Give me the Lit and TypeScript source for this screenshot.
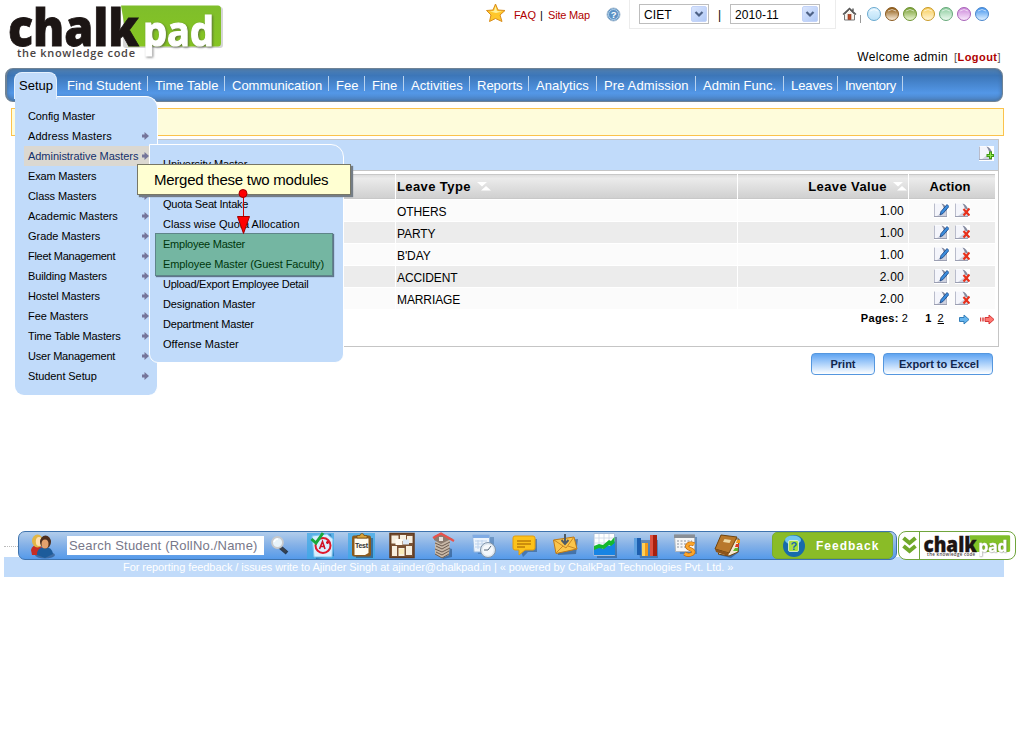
import { LitElement, html, svg, css } from "lit";
import { customElement, property } from "lit/decorators.js";
import { styleMap } from "lit/directives/style-map.js";

type Entry = [label: string, tracking: number];

const NAV: Entry[] = [["Find Student", .04], ["Time Table", .06], ["Communication", 0], ["Fee", .06], ["Fine", -.05], ["Activities", .06], ["Reports", 0], ["Analytics", .1], ["Pre Admission", .12], ["Admin Func.", .02], ["Leaves", -.1], ["Inventory", -.28]];
const SETUP: Entry[] = [["Config Master", -.1], ["Address Masters", .08], ["Administrative Masters", -.04], ["Exam Masters", -.17], ["Class Masters", -.1], ["Academic Masters", -.04], ["Grade Masters", -.04], ["Fleet Management", -.28], ["Building Masters", -.15], ["Hostel Masters", -.1], ["Fee Masters", -.08], ["Time Table Masters", -.15], ["User Management", -.22], ["Student Setup", -.08]];
const SUBMENU: Entry[] = [["University Master", -.04], ["Institute Master", -.04], ["Quota Seat Intake", -.2], ["Class wise Quota Allocation", .03], ["Employee Master", -.24], ["Employee Master (Guest Faculty)", -.09], ["Upload/Export Employee Detail", -.26], ["Designation Master", -.14], ["Department Master", -.2], ["Offense Master", .06]];
const ROWS = [["OTHERS", "1.00"], ["PARTY", "1.00"], ["B'DAY", "1.00"], ["ACCIDENT", "2.00"], ["MARRIAGE", "2.00"]];
const THEMES = [["#dff3ff", "#bfe3f8", "#6aa9cf"], ["#93601c", "#f3e4cf", "#8a5a20"], ["#7da23a", "#e3f0c8", "#6f9434"], ["#f8cf62", "#fff3cf", "#c99a28"], ["#93cfa4", "#e6f7ea", "#67a97a"], ["#cf8fdc", "#f6e2fa", "#a864b8"], ["#4a98ee", "#d6ebff", "#4a86cc"]];

const page = svg`<path d="M0 0H15V15H0Z" fill="#fff"/><path d="M1 .5H8.500L12.500 4.500V13H1Z" fill="#f4f5fb"/><path d="M3 13L12.500 6V13Z" fill="#cfd2df"/><path d="M.5 .5V13.500" stroke="#b9bccb"/><path d="M0 13.500H13" stroke="#9b9fb2"/><path d="M12.500 5V13" stroke="#b4b7c6"/><path d="M7.500 .5Q12 1.500 13 7L10 5.500 9 3Z" fill="#858a9e"/>`;

const ICONS: Record<string, unknown> = {
  grade: svg`<rect x="0" y="1" width="27" height="26" fill="#3fa9e6" opacity=".75"/><path d="M7 5L24 2 27 24 9 27Z" fill="#1b5e9a" opacity=".6"/><path d="M5 4L20 2 26 7 25 25 7 25Z" fill="#d8efff" stroke="#7cc3ee"/><circle cx="16" cy="13.500" r="7.500" fill="none" stroke="#e0182c" stroke-width="2"/><path d="M12.500 17L15.500 9.500 18 17M13 14.500H18M19 10.500H22M20.500 9V12" fill="none" stroke="#d01226" stroke-width="1.600"/><path d="M4.500 7L9 11 16 1" fill="none" stroke="#18a83c" stroke-width="3"/>`,
  test: svg`<rect x="0" y="1" width="27" height="26" fill="#3fa9e6" opacity=".75"/><path d="M6 6H25V26H8Z" fill="#27415c" opacity=".55"/><rect x="4" y="3.500" width="19" height="21" rx="2" fill="#8b5a1b"/><path d="M6.500 6.500H20.500V21L17 23H6.500Z" fill="#fffdf2"/><path d="M9 6V3.500H12A2 2 0 0 1 16 3.500H19V6Z" fill="#d9a43a" stroke="#73480f" stroke-width=".7"/><text x="7" y="15.500" font-size="7" font-weight="700" font-family="Liberation Sans" textLength="13" fill="#333">Test</text>`,
  board: svg`<rect x="2" y="1.500" width="24" height="24" fill="#7a5234" stroke="#5f3b20" stroke-width="1.500"/><path d="M3.500 3.500H10.500V11.500H3.500ZM12 3H18V9H12ZM19 4H24.500V11H19ZM4 14H9V24H4ZM10.500 16H16.500V24H10.500ZM18 14H24V23H18Z" fill="#f7efdf"/><path d="M7.500 7H14.500V13H7.500Z" fill="#fffaf0"/><path d="M15 7.500H21V12.500H15Z" fill="#dce8f5"/><path d="M11 17H16V22H11Z" fill="#fbedb8"/>`,
  papers: svg`<path d="M9 13L23 17V25L14 27Z" fill="#274b74" opacity=".55"/><path d="M6 10L18 6 21 9 20 23 13 26 6 22Z" fill="#c8b8a7"/><path d="M6 11L13 14 21 10M7 14L13 17 20 13M6 17L13 20 21 16M7 20L13 23 20 19M6 22L13 26 20 22" stroke="#6c5d52" fill="none" stroke-width="1"/><path d="M5 8L5 4 12 1 24 7 20 8 12 12Z" fill="#8c7c70"/><path d="M4 6L12 1.500 25 9" fill="none" stroke="#e8524c" stroke-width="2.200"/><path d="M10 5H14V9H10Z" fill="#e8e2dc"/>`,
  clock: svg`<path d="M7 5H25V22H9Z" fill="#28598f" opacity=".4"/><path d="M3.500 3H20.500V20H5Z" fill="#edf4fc" stroke="#93b6df"/><path d="M4 3H20V6H4Z" fill="#7fabe4"/><path d="M6 9H18M6 12H15M6 15H13M9 8V17M13 8V12" stroke="#bdd2ec"/><circle cx="19" cy="18" r="7.500" fill="#dfe7ef" stroke="#8094a9"/><circle cx="19" cy="18" r="5.500" fill="#f5f8fb"/><path d="M19 18L22 14M19 18H15" stroke="#58697a" fill="none"/>`,
  speech: svg`<path d="M6 7H27V20H18L13 25Z" fill="#274b74" opacity=".5"/><path d="M5 4H23Q25 4 25 6V16Q25 18 23 18H15L9 23V18H5Q3 18 3 16V6Q3 4 5 4Z" fill="#fcc21b" stroke="#e49c0b"/><path d="M7 9H21M7 12H21M7 15H15" stroke="#bd7d09" stroke-width="1.500"/>`,
  mail: svg`<path d="M5 9L27 7 25 22 7 23Z" fill="#274b74" opacity=".55"/><path d="M2.500 8L23 5 26 17 5 21.500Z" fill="#fbc54b" stroke="#bf7915"/><path d="M3 8L15 16 23 5M5 21L12 14M26 17L17 14" stroke="#c98724" fill="none"/><path d="M14 2V11M10.500 8L14 12 17.500 8" stroke="#4f5b66" stroke-width="2" fill="none"/>`,
  chart: svg`<path d="M6 5H26V26H6Z" fill="#274b74" opacity=".5"/><path d="M3 1.500H23.500V23.500H3Z" fill="#fff" stroke="#a8bdd8"/><path d="M3 6H23M3 11H23M8 2V20M13 2V20M18 2V20" stroke="#ccd5e5" stroke-width=".8"/><path d="M3 17L8 14 12 17 16 13 19 14 24 9V23H3Z" fill="#1784e4"/><path d="M3 14L8 12 12 13 18 8 20 9 23.500 5V11L20 14 18 13 13 17 8 16 3 18Z" fill="#15b92d"/>`,
  bars: svg`<path d="M5 8H26V26H8Z" fill="#274b74" opacity=".45"/><rect x="2" y="6" width="7" height="17" fill="#1e5fb0"/><rect x="2" y="6" width="3" height="17" fill="#5ea1e2"/><rect x="10" y="11" width="6" height="13" fill="#f09b18"/><rect x="10" y="11" width="3" height="13" fill="#ffd057"/><rect x="18" y="3" width="7" height="21" fill="#a8200f"/><rect x="18" y="3" width="3" height="21" fill="#dd5140"/>`,
  money: svg`<path d="M6 5H25V22H8Z" fill="#28598f" opacity=".45"/><path d="M2.500 3H22.500V19.500H3.500Z" fill="#f6f6f6" stroke="#aeb5bd"/><path d="M2 2.500H23V6H2Z" fill="#888e96"/><path d="M5 9H20M5 12H20M5 15H18" stroke="#aeb4bc" stroke-dasharray="2 1.500" stroke-width="1.500"/><path d="M22 12.500Q19 10.500 16 12.500 13.500 14.500 17 16.500L20 18Q23 20 20 22 16 24 12.500 21.500" fill="none" stroke="#b45f08" stroke-width="4"/><path d="M22 12.500Q19 10.500 16 12.500 13.500 14.500 17 16.500L20 18Q23 20 20 22 16 24 12.500 21.500" fill="none" stroke="#fba52a" stroke-width="2.800"/>`,
  book: svg`<path d="M6 23L25 13 26 20 18 26Z" fill="#274b74" opacity=".6"/><path d="M20 7L26 7 25 20 16 24 5 22Z" fill="#f3ead2" stroke="#6e430f"/><path d="M8 3L24 5 16 21 2 17Z" fill="#b8782c" stroke="#6e430f"/><path d="M2 17L16 21 15 24 3 20Z" fill="#8d541b"/><path d="M11.500 7L18 8 16.500 11 10 10Z" fill="#efd9a4"/><path d="M24 8H27V11H23Z" fill="#f29a1b"/><path d="M23 12H26V15H22Z" fill="#db3a24"/><path d="M22 16H25V19H20Z" fill="#65b62d"/>`,
};
const DOCK = ["grade", "test", "board", "papers", "clock", "speech", "mail", "chart", "bars", "money", "book"];

const logoArt = (small: boolean) => svg`
  <defs>
    <linearGradient id="leaf" x1="0" y1="0" x2="0" y2="1"><stop offset="0" stop-color="#7fbe2b"/><stop offset="1" stop-color="#86c522"/></linearGradient>
  </defs>
  <rect x="123" y="7" width="100" height="41" rx="3" fill="#bbb" opacity="${small ? 0 : .6}"/>
  <path d="M121 5.500H218Q221 5.500 221 9V43Q221 46.500 218 46.500H128Z" fill="url(#leaf)"/>
  <g font-family="Open Sans, Noto Sans, sans-serif">
    <text x="8" y="46" font-size="52" font-weight="800" textLength="131" lengthAdjust="spacingAndGlyphs" fill="#1c1514" stroke="#1c1514" stroke-width=".8">chalk</text>
    <text x="143" y="46" font-size="41" font-weight="700" textLength="71" lengthAdjust="spacingAndGlyphs" fill="#fff" stroke="#fff" stroke-width="1.200" class="pad">pad</text>
    <text x="17" y="57" font-size="11" font-weight="600" textLength="118" fill="#4a4444">the knowledge code</text>
  </g>`;

@customElement("drop-select")
class DropSelect extends LitElement {
  @property() value = "";
  static styles = css`
    :host { display: flex; box-sizing: border-box; height: 20px; border: 1px solid #bdbdbd; background: #fff; align-items: center; justify-content: space-between; padding: 0 1px 0 4px; font: 12px "Liberation Sans", sans-serif; letter-spacing: .1px; }
    svg { display: block; }
    span { padding-top: 1px; }
  `;
  render() {
    return html`<span>${this.value}</span><svg width="16" height="16" viewBox="0 0 16 16"><defs><linearGradient id="b" x1="0" y1="0" x2="1" y2="1"><stop stop-color="#dbe6fd"/><stop offset="1" stop-color="#afc8f6"/></linearGradient></defs><rect x=".5" y=".5" width="15" height="15" rx="1.500" fill="url(#b)" stroke="#c3d3f8"/><path d="M4.500 6L8 9.500 11.500 6" fill="none" stroke="#4d6185" stroke-width="2.200"/></svg>`;
  }
}

@customElement("app-root")
class AppRoot extends LitElement {
  static styles = css`
    :host { display: block; position: relative; width: 1020px; height: 744px; overflow: hidden; background: #fff; color: #000; font: 12px/1 "Liberation Sans", Arial, sans-serif; }
    * { box-sizing: border-box; }
    svg { display: block; flex: none; }
    span { white-space: nowrap; }
    .pad { filter: drop-shadow(1px 1px 1px rgba(60, 60, 60, .6)); }
    .header { height: 68px; display: grid; grid-template-columns: 486px 1fr; }
    .tools { display: grid; grid-template-rows: 29px 1fr; }
    .toolrow { display: flex; align-items: center; height: 29px; }
    .star { margin-top: -3px; }
    .faq { width: 25px; margin-left: 8px; color: #b00000; font-size: 11px; padding-top: 1px; }
    .bar { width: 8px; font-size: 11px; margin-left: 1px; padding-top: 1px; }
    .map { width: 45px; color: #b00000; font-size: 11px; letter-spacing: -.2px; padding-top: 1px; }
    .help { margin-left: 13px; }
    .chooser { margin: -1px 0 0 8px; width: 207px; height: 30px; border: 1px solid #ececec; padding-left: 9px; display: flex; align-items: center; }
    .chooser drop-select { width: 70px; }
    .chooser .year { width: 90px; }
    .chooser span { width: 21px; text-align: center; padding-top: 1px; }
    .home { margin: -1px 0 0 6px; }
    .thin { width: 1px; height: 8px; margin: 8px 5px 0 3px; background: #999; }
    .themes { display: flex; gap: 2px; margin-top: -2px; }
    .welcome { display: flex; justify-content: flex-end; padding: 22px 19px 0 0; gap: 6px; }
    .hello { letter-spacing: .38px; }
    .logout { font-size: 11px; color: #555; letter-spacing: .45px; padding-top: 1px; }
    .logout b { color: #b00000; }
    .nav { margin: 0 17px 0 5px; height: 34px; padding-top: 9px; border: 1px solid #6f8396; border-left: 2px solid #6f8396; border-radius: 8px; box-shadow: inset 0 0 4px #47698f; background: linear-gradient(#5183b6, #3c76b8 20%, #5397e7 75%, #4c84c4); display: grid; grid-template-columns: 88px 77px 104px 36px 39px 66px 59px 68px 99px 88px 54px 65px; padding-left: 53px; }
    .nav span { color: #fff; font-size: 13px; line-height: 19px; padding-left: 7px; }
    .navitem { height: 15px; margin-top: -2px; border-right: 1px solid #b8d2ef; display: flex; }
    .notice { margin: 6px 16px 0 11px; height: 28px; border: 1px solid #fbc24c; background: #fefcdb; }
    .panel { margin: 3px 21px 0 16px; height: 208px; border: 1px solid #c5c5c5; display: flex; flex-direction: column; }
    .title { height: 31px; background: #c1dbfa; border-bottom: 1px solid #c5c5c5; display: flex; justify-content: flex-end; padding: 6px 4px 0 0; }
    .table { margin: 3px 3px 0 4px; display: grid; grid-template-columns: 374px 341px 170px 86px; column-gap: 1px; row-gap: 1px; }
    .head { height: 25px; background: linear-gradient(#dedede, #ebebeb 15%, #d0d0d0); border-top: 1px solid #c8c8c8; border-bottom: 1px solid #c8c8c8; display: flex; align-items: center; font-weight: 700; font-size: 13px; letter-spacing: .4px; padding-left: 1px; gap: 6px; }
    .cell { height: 21px; background: #fbfbfb; padding: 5px 4px 0 1px; font-size: 12px; line-height: 14px; letter-spacing: -.1px; }
    .odd { background: #ececec; }
    .right { justify-content: flex-end; text-align: right; padding-right: 4px; }
    .headright { padding-right: 1px; }
    .value { letter-spacing: .25px; padding-top: 4px; }
    .center { justify-content: center; padding-right: 5px; letter-spacing: .1px; }
    .actions { display: flex; gap: 6px; padding: 3px 0 0 25px; }
    .pages { display: flex; align-items: center; height: 18px; justify-content: flex-end; padding-right: 3px; font-size: 11px; letter-spacing: .3px; }
    .pages b:nth-of-type(2) { margin: 0 6px 0 17px; }
    .next { margin: 2px 0 0 15px; }
    .last { margin: 2px 0 0 10px; }
    .count { margin-left: 3px; }
    .buttons { display: flex; gap: 8px; justify-content: flex-end; padding: 6px 27px 0 0; height: 184px; }
    .button { width: 64px; height: 22px; border: 1px solid #5597df; border-radius: 4px; background: linear-gradient(#5fa4f0, #8fc0f8 30%, #fff); font-size: 11px; font-weight: 700; color: #12274e; text-align: center; line-height: 20px; }
    .wide { width: 110px; padding-left: 2px; }
    .dock { display: flex; height: 29px; }
    .dots { width: 14px; margin-left: 4px; height: 16px; border-bottom: 1px dotted #bbb; }
    .dockbar { position: relative; z-index: 1; width: 879px; display: flex; align-items: center; border: 1px solid #3e73ae; border-radius: 7px; background: linear-gradient(#b2cdeb, #83b0e7 50%, #559aea); }
    .people { margin-left: 9px; }
    .search { margin-left: 11px; width: 197px; height: 19px; background: #fff; color: #777789; font-size: 13px; line-height: 19px; padding-left: 2px; letter-spacing: .2px; }
    .lens { margin-left: 6px; }
    .apps { display: flex; justify-content: space-between; width: 434px; margin-left: 17px; }
    .feedback { margin-left: 31px; width: 121px; height: 27px; border-radius: 5px; background: #8abc27; border: 1px solid #79ad2c; display: flex; align-items: center; padding-left: 8px; gap: 9px; color: #fff; font: 700 12px "Liberation Sans", sans-serif; letter-spacing: 1px; }
    .badge { margin-left: 1px; width: 118px; border: 1px solid #70a53c; border-radius: 8px; background: #fff; display: flex; align-items: center; }
    .arrows { border-right: 1px solid #70a53c; width: 21px; height: 27px; display: flex; align-items: center; justify-content: center; }
    .mini { margin-left: 1px; }
    .footer { margin: -3px 16px 0 4px; height: 20px; background: #c1dbfa; color: #fff; font-size: 11px; line-height: 21px; padding-left: 119px; letter-spacing: -.06px; }
    .tab { position: absolute; left: 14px; top: 72px; width: 43px; height: 27px; background: #c1dbfa; border: 1px solid #e4f0fd; border-bottom: 0; border-radius: 8px 8px 0 0; padding: 6px 0 0 4px; font-size: 13px; z-index: 3; }
    .menu { position: absolute; left: 15px; top: 96px; width: 143px; height: 299px; background: #c1dbfa; border-top: 1px solid #fff; border-right: 1px solid #fff; border-radius: 0 12px 9px 9px; padding: 9px 0 0 9px; z-index: 2; }
    .item { width: 125px; height: 20px; display: flex; align-items: center; justify-content: space-between; padding: 0 0 0 4px; font-size: 11px; }
    .active { background: #dbd8d1; color: #14306c; }
    .sub { position: absolute; left: 149px; top: 144px; width: 195px; height: 219px; background: #c1dbfa; border: 1px solid #fff; border-radius: 0 13px 9px 9px; padding: 9px 0 0 9px; z-index: 4; }
    .sub .item { width: 180px; }
    .mark { position: absolute; left: 155px; top: 233px; width: 178px; height: 43px; background: rgba(0, 128, 30, .4); border: 1px solid rgba(80, 100, 120, .6); box-shadow: 1px 1px 1px #60758c; z-index: 5; }
    .callout { position: absolute; left: 137px; top: 164px; width: 214px; height: 31px; background: #ffffd2; border: 1px solid #777766; box-shadow: 2px 2px 1px #747d86; font-size: 15px; line-height: 29px; padding-left: 16px; letter-spacing: -.24px; z-index: 6; }
    .pointer { position: absolute; left: 236px; top: 187px; z-index: 7; }
  `;
  render() {
    return html`
      <div class="header">
        <svg width="240" height="68">${logoArt(false)}</svg>
        <div class="tools">
          <div class="toolrow">
            <svg class="star" width="20" height="20" viewBox="0 0 20 20"><path d="M9.500 1L12 7 19 7.500 14 12 16 18.500 9.500 15.500 3.500 18.500 5 12 .5 7.500 7 7Z" fill="#ffc72b" stroke="#d98d1c"/><path d="M9.500 3L11 8 16 8.500 10 10 4 8.500 8 8Z" fill="#fff19a"/></svg>
            <span class="faq">FAQ</span><span class="bar">|</span><span class="map">Site Map</span>
            <svg class="help" width="15" height="15" viewBox="0 0 15 15"><circle cx="7.500" cy="7.500" r="6.500" fill="#5b91c4" stroke="#a6bdd2"/><circle cx="7.500" cy="7.500" r="5" fill="none" stroke="#c7dff2" stroke-width=".8"/><text x="4.800" y="11" font-size="9.500" font-weight="700" font-family="Liberation Sans" fill="#fff">?</text></svg>
            <div class="chooser"><drop-select value="CIET"></drop-select><span>|</span><drop-select class="year" value="2010-11"></drop-select></div>
            <svg class="home" width="15" height="14" viewBox="0 0 15 14"><path d="M2.500 7.500V13H12.500V7.500L7.500 2.500Z" fill="#f7f4ee" stroke="#777"/><path d="M1 7.500L7.500 1.500 14 7.500M11 1.500V4" fill="none" stroke="#555" stroke-width="1.400"/><rect x="6" y="7.500" width="3" height="5" fill="#b84c2a" stroke="#8b2f17" stroke-width=".6"/></svg>
            <div class="thin"></div>
            <div class="themes">${THEMES.map(([a, b, c], i) => html`<svg width="16" height="16" viewBox="0 0 16 16"><defs><linearGradient id=${"t" + i} x1="0" y1="0" x2="0" y2="1"><stop offset=".1" stop-color=${a}/><stop offset=".9" stop-color=${b}/></linearGradient></defs><circle cx="8" cy="8" r="6.500" fill=${`url(#t${i})`} stroke=${c}/><path d="M4 5Q8 2 12 5" fill="none" stroke="#fff" opacity=".6"/></svg>`)}</div>
          </div>
          <div class="welcome"><span class="hello">Welcome admin</span><span class="logout">[<b>Logout</b>]</span></div>
        </div>
      </div>
      <div class="nav">${NAV.map((e) => html`<div class="navitem">${this.label(e)}</div>`)}</div>
      <div class="notice"></div>
      <div class="panel">
        <div class="title"><svg width="15" height="15" viewBox="0 0 15 15">${page}<path d="M11.500 5.500V13M7.500 9.500H15" stroke="#3f9913" stroke-width="3"/><path d="M11.500 6.500V12M8.500 9.500H14" stroke="#8fe34d"/></svg></div>
        <div class="table">
          <div class="head"></div>
          <div class="head"><span>Leave Type</span>${this.sorter()}</div>
          <div class="head right headright"><span>Leave Value</span>${this.sorter()}</div>
          <div class="head center"><span>Action</span></div>
          ${ROWS.map(([name, value], i) => {
            const odd = i % 2 ? "odd" : "";
            return html`<div class="cell ${odd}"></div><div class="cell ${odd}">${name}</div><div class="cell right value ${odd}">${value}</div>
              <div class="cell actions ${odd}"><svg width="15" height="15" viewBox="0 0 15 15">${page}<path d="M6 12L7 8.500 13 1.500 15 3.500 9 10.500Z" fill="#3b8ddd" stroke="#173f7e" stroke-width=".8"/></svg><svg width="15" height="15" viewBox="0 0 15 15">${page}<path d="M8.500 6L14.500 12.500M14.500 5.500L8.500 12.500" stroke="#e8311b" stroke-width="2.200"/></svg></div>`;
          })}
        </div>
        <div class="pages"><b>Pages:</b><span class="count">2</span><b>1</b><u>2</u>
          <svg class="next" width="11" height="11" viewBox="0 0 11 11"><path d="M.5 3.500H5V1L10 5.500 5 10V7.500H.5Z" fill="#66b5ee" stroke="#347fb9"/></svg>
          <svg class="last" width="15" height="11" viewBox="0 0 15 11"><path d="M.5 3.500V7.500M3 3.500V7.500" stroke="#db4141" stroke-width="1.500"/><path d="M5 3.500H9V1L14 5.500 9 10V7.500H5Z" fill="#ff7771" stroke="#d63838"/></svg>
        </div>
      </div>
      <div class="buttons"><div class="button">Print</div><div class="button wide">Export to Excel</div></div>
      <div class="dock">
        <div class="dots"></div>
        <div class="dockbar">
          <svg class="people" width="28" height="26" viewBox="0 0 28 26"><ellipse cx="17" cy="22" rx="10" ry="3.500" fill="#294b75" opacity=".6"/><path d="M3 17Q4 12 10 12L15 15 13 22H4Z" fill="#c72d24"/><ellipse cx="9.500" cy="8" rx="5.500" ry="6.500" fill="#e2b646"/><ellipse cx="11" cy="8.500" rx="3.200" ry="4.500" fill="#ffe0ae"/><path d="M9 22Q9 14 17 14 24 14 25 21L17 25Z" fill="#1d5c9b"/><ellipse cx="17.500" cy="9" rx="5.500" ry="6.500" fill="#4d2f1f"/><ellipse cx="17" cy="11" rx="3.500" ry="4.500" fill="#e3a26d"/></svg>
          <div class="search">Search Student (RollNo./Name)</div>
          <svg class="lens" width="20" height="22" viewBox="0 0 20 22"><path d="M10 12L17 18" stroke="#263a53" stroke-width="4"/><path d="M9 11L16 17" stroke="#39424e" stroke-width="2.500"/><circle cx="7.500" cy="7.500" r="5.500" fill="#e8f3fa" stroke="#c7c9cc" stroke-width="1.800"/><path d="M4 7Q5 4 8 4" fill="none" stroke="#fff" stroke-width="1.500"/></svg>
          <div class="apps">${DOCK.map((k) => html`<svg width="28" height="27" viewBox="0 0 28 27">${ICONS[k]}</svg>`)}</div>
          <div class="feedback"><svg width="26" height="24" viewBox="0 0 26 24"><circle cx="13" cy="12" r="11" fill="#176bab"/><ellipse cx="12" cy="6" rx="8" ry="4.500" fill="#71c6ee"/><rect x="7.500" y="6.500" width="10" height="11" rx="1.500" fill="#a8df3e" stroke="#e8f8d5" stroke-width=".8"/><text x="9.500" y="15.500" font-size="11" font-weight="700" font-family="Liberation Sans" fill="#176bab">?</text></svg><span>Feedback</span></div>
        </div>
        <div class="badge"><div class="arrows"><svg width="15" height="21" viewBox="0 0 15 21"><path d="M1.500 3L7.500 8 13.500 3M1.500 11L7.500 16 13.500 11" fill="none" stroke="#70a82b" stroke-width="4"/></svg></div><svg class="mini" width="92" height="25" viewBox="2 0 226 61">${logoArt(true)}</svg></div>
      </div>
      <div class="footer"><span>For reporting feedback / issues write to Ajinder Singh at ajinder@chalkpad.in | « powered by ChalkPad Technologies Pvt. Ltd. »</span></div>

      <div class="tab">Setup</div>
      <div class="menu">${SETUP.map((e, i) => html`<div class="item ${i === 2 ? "active" : ""}">${this.label(e)}${i === 0 ? "" : html`<svg width="7" height="8" viewBox="0 0 7 8"><path d="M0 2.500H2.500V0L7 4 2.500 8V5.500H0Z" fill="#75759a"/></svg>`}</div>`)}</div>
      <div class="sub">${SUBMENU.map((e) => html`<div class="item">${this.label(e)}</div>`)}</div>
      <div class="mark"></div>
      <div class="callout">Merged these two modules</div>
      <svg class="pointer" width="14" height="48" viewBox="0 0 14 48"><path d="M7.500 6V30" stroke="#d00000"/><circle cx="7" cy="6.500" r="4" fill="#f00" stroke="#a00000"/><path d="M1.500 29.500H13.500L7.500 46.500Z" fill="#f00" stroke="#a00000"/></svg>
    `;
  }
  label([text, tracking]: Entry) {
    return html`<span style=${styleMap({ letterSpacing: `${tracking}px` })}>${text}</span>`;
  }
  sorter() {
    return html`<svg width="14" height="9" viewBox="0 0 14 9"><path d="M0 0H10L5 4.500Z M4 8.500H14L9 4Z" fill="#fff"/></svg>`;
  }
}
